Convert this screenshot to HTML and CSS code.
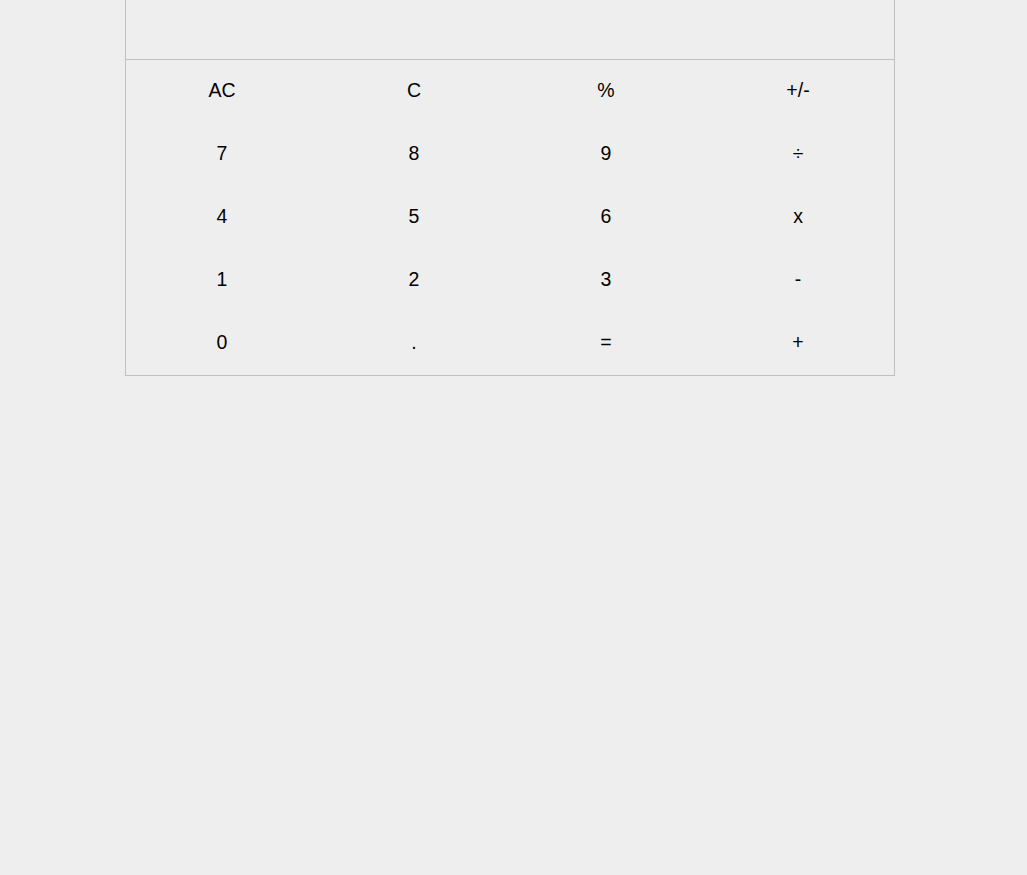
FILE: index.html
```html
<!DOCTYPE html>
<html>
<head>
<meta charset="utf-8">
<link rel="stylesheet" href="styles.css">
</head>
<body>
<div class="calc">
  <div class="display"></div>
  <div class="keys">
    <button class="key">AC</button>
    <button class="key">C</button>
    <button class="key">%</button>
    <button class="key">+/-</button>
    <button class="key">7</button>
    <button class="key">8</button>
    <button class="key">9</button>
    <button class="key">÷</button>
    <button class="key">4</button>
    <button class="key">5</button>
    <button class="key">6</button>
    <button class="key">x</button>
    <button class="key">1</button>
    <button class="key">2</button>
    <button class="key">3</button>
    <button class="key">-</button>
    <button class="key">0</button>
    <button class="key">.</button>
    <button class="key">=</button>
    <button class="key">+</button>
  </div>
</div>
</body>
</html>
```
FILE: styles.css
```css
html, body {
  margin: 0;
  padding: 0;
  background: #eeeeee;
}
body {
  font-family: "Liberation Sans", Arial, sans-serif;
}
.calc {
  width: 768px;
  margin-left: 125px;
  border: 1px solid #c0c0c0;
  border-top: none;
}
.display {
  height: 59px;
  border-bottom: 1px solid #c0c0c0;
}
.keys {
  display: grid;
  grid-template-columns: repeat(4, 192px);
  grid-auto-rows: 63px;
}
.key {
  background: transparent;
  border: none;
  padding: 0 0 2px 0;
  margin: 0;
  font-family: "Liberation Sans", Arial, sans-serif;
  font-size: 19.5px;
  color: #000;
}
```
